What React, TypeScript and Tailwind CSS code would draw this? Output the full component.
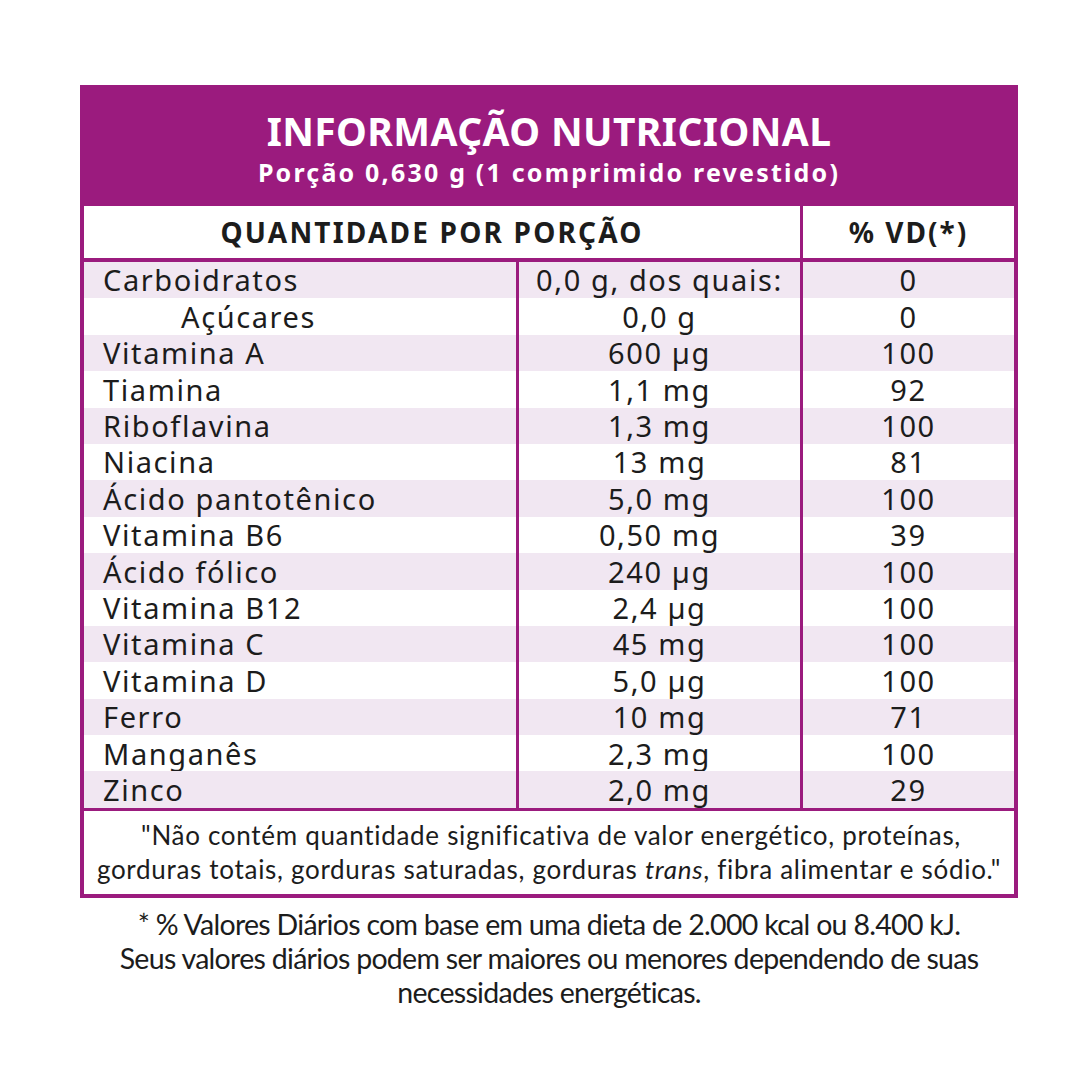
const rows: [string, string, string, boolean?][] = [
  ["Carboidratos", "0,0 g, dos quais:", "0"],
  ["Açúcares", "0,0 g", "0", true],
  ["Vitamina A", "600 µg", "100"],
  ["Tiamina", "1,1 mg", "92"],
  ["Riboflavina", "1,3 mg", "100"],
  ["Niacina", "13 mg", "81"],
  ["Ácido pantotênico", "5,0 mg", "100"],
  ["Vitamina B6", "0,50 mg", "39"],
  ["Ácido fólico", "240 µg", "100"],
  ["Vitamina B12", "2,4 µg", "100"],
  ["Vitamina C", "45 mg", "100"],
  ["Vitamina D", "5,0 µg", "100"],
  ["Ferro", "10 mg", "71"],
  ["Manganês", "2,3 mg", "100"],
  ["Zinco", "2,0 mg", "29"],
];

export default function App() {
  return (
    <div className="w-[1080px] h-[1080px] bg-white pt-[85px] pl-[80px] font-['Noto_Sans',sans-serif] text-[#1c1c1c]">
      <div className="w-[938px] bg-[#9b1b7e] p-[4px] flex flex-col">
        {/* Cabeçalho */}
        <div className="h-[116px] flex flex-col items-center justify-center text-white font-bold pt-[3px]">
          <h1 className="text-[39px] leading-[44px] tracking-[0.4px]">INFORMAÇÃO NUTRICIONAL</h1>
          <p className="mt-[3px] text-[25px] leading-[32px] tracking-[2.2px]">Porção 0,630 g (1 comprimido revestido)</p>
        </div>

        <div className="grid grid-cols-[716px_1fr] gap-x-[3px] mt-[1px]">
          <div className="bg-white h-[52px] flex items-center justify-center font-bold text-[28px] tracking-[2.2px] pr-[20px]">QUANTIDADE POR PORÇÃO</div>
          <div className="bg-white h-[52px] flex items-center justify-center font-bold text-[28px] tracking-[2px]">% VD(*)</div>
        </div>

        {/* Linhas */}
        <div className="grid grid-cols-[432px_281px_1fr] gap-x-[3px] mt-[4px] text-[29px] tracking-[1.6px]">
          {rows.map(([name, qty, vd, indent], i) => {
            const bg = i % 2 === 0 ? "bg-[#f1e7f2]" : "bg-white";
            return [
              <div key={name + "a"} className={`${bg} h-[36.4px] flex items-center ${indent ? "pl-[97px]" : "pl-[19px]"}`}>{name}</div>,
              <div key={name + "b"} className={`${bg} h-[36.4px] flex items-center justify-center`}>{qty}</div>,
              <div key={name + "c"} className={`${bg} h-[36.4px] flex items-center justify-center`}>{vd}</div>,
            ];
          })}
        </div>

        {/* Nota */}
        <div className="bg-white mt-[3px] h-[83px] flex flex-col items-center justify-center font-['Lato',sans-serif] text-[26px] leading-[34px] tracking-[0.7px]">
          <p className="pl-[4px]">"Não contém quantidade significativa de valor energético, proteínas,</p>
          <p>gorduras totais, gorduras saturadas, gorduras <i>trans</i>, fibra alimentar e sódio."</p>
        </div>
      </div>

      <div className="w-[938px] mt-[9px] text-center font-['Lato',sans-serif] text-[28.5px] leading-[34px] tracking-[-0.7px]">
        <p>* % Valores Diários com base em uma dieta de 2.000 kcal ou 8.400 kJ.</p>
        <p>Seus valores diários podem ser maiores ou menores dependendo de suas</p>
        <p>necessidades energéticas.</p>
      </div>
    </div>
  );
}
